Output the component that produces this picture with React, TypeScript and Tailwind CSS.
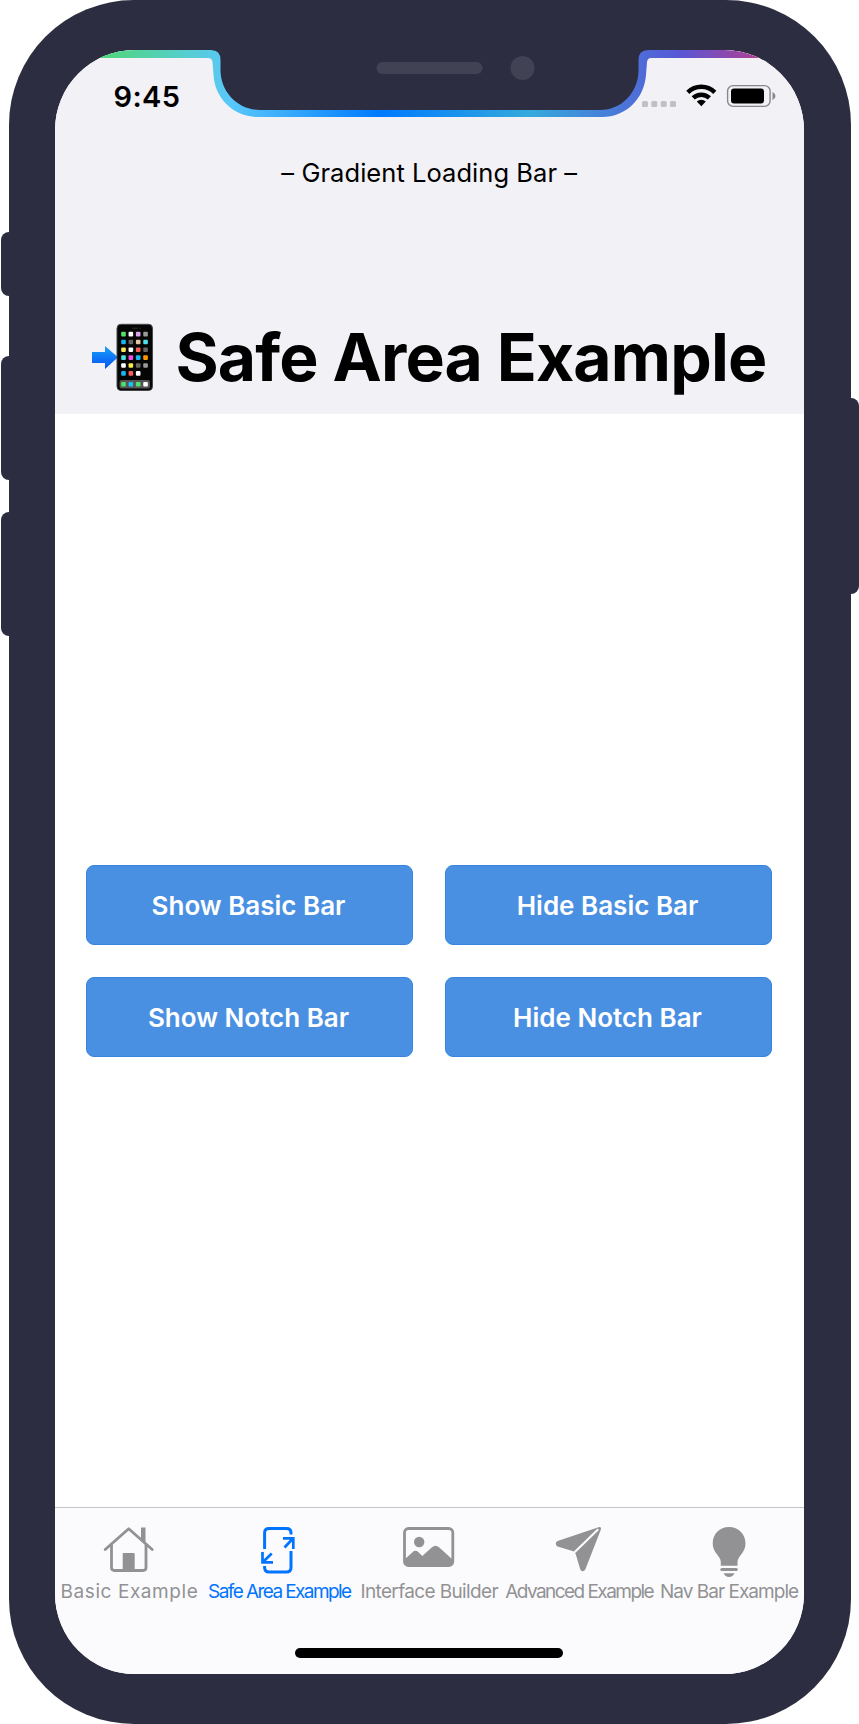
import type { ReactNode } from "react";

const NOTCH_INNER =
  "M54 50H211Q220.5 50 220.5 60V70C220.5 92 238 110 260 110H600C622 110 638.500 92 638.500 70V60Q638.500 50 648 50H804";

function Notch() {
  return (
    <svg className="pointer-events-none absolute top-0 left-0" width="859" height="140" viewBox="0 0 859 140" fill="none">
      <defs>
        <linearGradient id="bar" gradientUnits="userSpaceOnUse" x1="80" y1="0" x2="830" y2="0">
          <stop offset="0" stopColor="#4cd964" />
          <stop offset="0.2" stopColor="#5ac8fa" />
          <stop offset="0.4" stopColor="#007aff" />
          <stop offset="0.6" stopColor="#34aadc" />
          <stop offset="0.8" stopColor="#5856d6" />
          <stop offset="1" stopColor="#ff2d55" />
        </linearGradient>
        <clipPath id="screen">
          <path d="M54.500 130A80 80 0 0 1 134.500 50H724A80 80 0 0 1 804 130Z" />
        </clipPath>
      </defs>
      <g clipPath="url(#screen)">
        <path
          d="M54 50V58H208Q212 58 212.500 62L213.500 75C215 99 234 117 258 117H602C626 117 644 99 646 75L647 62Q647.500 58 651 58H804V50Z"
          fill="url(#bar)"
        />
      </g>
      <path d={NOTCH_INNER + "V40H54Z"} fill="#2d2d41" />
      <rect x="376.500" y="62" width="106" height="12" rx="6" fill="#424255" />
      <circle cx="522.500" cy="68" r="12" fill="#424255" />
    </svg>
  );
}

function StatusIcons() {
  return (
    <svg width="136" height="26" viewBox="641 83 136 26" fill="none">
      <g fill="#c1c0c5">
        <rect x="642" y="101" width="6" height="6" rx="1.500" />
        <rect x="651.300" y="101" width="6" height="6" rx="1.500" />
        <rect x="660.700" y="101" width="6" height="6" rx="1.500" />
        <rect x="670" y="101" width="6" height="6" rx="1.500" />
      </g>
      <g stroke="#000" strokeWidth="4.500">
        <path d="M687.800 92.300A19.500 19.500 0 0 1 714.800 92.300" />
        <path d="M693.200 97.900A11.700 11.700 0 0 1 709.400 97.900" />
      </g>
      <path d="M696.800 101.600A6.700 6.700 0 0 1 705.800 101.600L701.300 106.300Z" fill="#000" />
      <rect x="727.600" y="85.600" width="42.500" height="20.800" rx="5.500" stroke="#88878b" strokeWidth="1.400" />
      <rect x="731" y="88.500" width="33" height="15" rx="3" fill="#000" />
      <path d="M772.500 92Q775.500 93.500 775.500 96T772.500 100.200Z" fill="#88878b" />
    </svg>
  );
}

const APP_ROWS = [
  ["#4fe26a", "#fff", "#dba2ee", "#999"],
  ["#16b5f5", "#666", "#e3c4a0", "#4be0f0"],
  ["#fbe94b", "#fff", "#fa5e55", "#666"],
  ["#4be0e6", "#ef4ee4", "#16b5f5", "#ff9800"],
  ["#fff", "#fbe94b", "#666", "#999"],
  ["#16b5f5", "#fa5e55", "#fff"],
];
const DOCK = ["#4fe26a", "#18c1f6", "#4fe26a", "#fff"];

function PhoneWithArrow() {
  return (
    <svg className="shrink-0" width="62" height="68" viewBox="92 323 62 68">
      <defs>
        <linearGradient id="arrow" x1="0" y1="0" x2="0" y2="1">
          <stop offset="0" stopColor="#18a3f8" />
          <stop offset="1" stopColor="#0550f5" />
        </linearGradient>
      </defs>
      <path d="M92 352H105V346L118 357.300L105 369V363H92Z" fill="url(#arrow)" />
      <rect x="117" y="324.300" width="35.500" height="66.200" rx="4" fill="#050505" stroke="#46484a" strokeWidth="1" />
      <rect x="132" y="327.500" width="6" height="1.800" rx="0.900" fill="#222" />
      <circle cx="140" cy="328.400" r="0.900" fill="#222" />
      <rect x="119.500" y="380" width="30.500" height="8.500" rx="2" fill="#555558" />
      {APP_ROWS.map((row, r) =>
        row.map((c, i) => (
          <rect key={`${r}-${i}`} x={121.2 + i * 7.35} y={331.8 + r * 7.85} width="4.600" height="4.600" rx="1" fill={c} />
        )),
      )}
      {DOCK.map((c, i) => (
        <rect key={i} x={121.2 + i * 7.35} y={382} width="4.600" height="4.600" rx="1" fill={c} />
      ))}
    </svg>
  );
}

function HomeIcon() {
  return (
    <svg width="54" height="54" viewBox="102 1525 54 54" fill="none" stroke="#929294" strokeLinecap="round" strokeLinejoin="round">
      <path d="M105.200 1549.500L128.700 1528.700L152.200 1549.500" strokeWidth="2.800" />
      <path d="M111.500 1545V1567.500Q111.500 1570.500 114.500 1570.500H143Q146 1570.500 146 1567.500V1545" strokeWidth="2.800" />
      <path d="M141 1527.500H145.500V1543L141 1539Z" fill="#929294" stroke="none" />
      <path d="M122.700 1571V1554Q122.700 1553 123.700 1553H133.700Q134.700 1553 134.700 1554V1571Z" fill="#929294" stroke="none" />
    </svg>
  );
}

function SafeAreaIcon() {
  return (
    <svg width="54" height="54" viewBox="252 1525 54 54" fill="none" stroke="#0074ff" strokeWidth="3">
      <path d="M264.600 1549V1533Q264.600 1528.600 269 1528.600H286.500Q291 1528.600 291 1533V1534.500" />
      <path d="M291 1551V1567.500Q291 1572 286.500 1572H269Q264.600 1572 264.600 1567.500V1566" />
      <path d="M283 1538.300H293.300V1549M292.500 1539L284.500 1547.500" strokeWidth="2.700" />
      <path d="M262.500 1552V1562.300H273M263.500 1561.500L271.700 1553.500" strokeWidth="2.700" />
    </svg>
  );
}

function ImageIcon() {
  return (
    <svg width="54" height="54" viewBox="402 1525 54 54" fill="none">
      <rect x="404.500" y="1528.500" width="48.300" height="37" rx="4" stroke="#929294" strokeWidth="2.800" />
      <circle cx="419.200" cy="1542" r="5.200" fill="#929294" />
      <path
        d="M404.500 1559.500L412.500 1552.200Q415.500 1549.500 418.500 1552.200L422.300 1556L432 1547.300Q435.500 1544.300 439 1547.300L453 1560V1562Q453 1566 449 1566H408.500Q404.500 1566 404.500 1562Z"
        fill="#929294"
      />
    </svg>
  );
}

function PlaneIcon() {
  return (
    <svg width="54" height="54" viewBox="552 1525 54 54" fill="#929294">
      <path d="M598.500 1527.200Q601.700 1526.400 600.800 1529.800L585.700 1568.500C584.300 1572.200 581 1572 580 1568.500L575.700 1554L573.300 1551.300L558.300 1546.700C555 1545.500 555 1541.800 558.300 1540.700Z" />
      <path d="M572.500 1554.200L598.200 1529.300" stroke="#fbfbfd" strokeWidth="2.200" />
    </svg>
  );
}

function BulbIcon() {
  return (
    <svg width="54" height="54" viewBox="702 1525 54 54" fill="#929294">
      <path d="M729 1527C738.500 1527 745.500 1534 745.500 1543.500C745.500 1553 737.500 1556 737.500 1562V1565.700H720.800V1562C720.800 1556 712.700 1553 712.700 1543.500C712.700 1534 719.500 1527 729 1527Z" />
      <rect x="720.300" y="1568" width="17.500" height="3" rx="1.500" />
      <path d="M723.700 1573.300H734.500Q733 1577 729 1577T723.700 1573.300Z" />
    </svg>
  );
}

function Button({ children }: { children: ReactNode }) {
  return (
    <button className="flex h-20 items-center justify-center rounded-lg border border-[#3785de] bg-[#4a90e2] pt-[2px] pr-[2px] text-[26px] leading-none font-semibold text-white">
      {children}
    </button>
  );
}

const TABS = [
  { label: "Basic Example", icon: <HomeIcon />, style: "text-[#929294] tracking-[0.57px]" },
  { label: "Safe Area Example", icon: <SafeAreaIcon />, style: "text-[#0074ff] tracking-[-1.58px]" },
  { label: "Interface Builder", icon: <ImageIcon />, style: "text-[#929294] tracking-[-0.63px]" },
  { label: "Advanced Example", icon: <PlaneIcon />, style: "text-[#929294] tracking-[-1.55px]" },
  { label: "Nav Bar Example", icon: <BulbIcon />, style: "text-[#929294] tracking-[-0.97px]" },
];

export default function App() {
  return (
    <div className="relative h-[1724px] w-[859px] overflow-hidden bg-white px-[8.5px] font-['Inter','Liberation_Sans',sans-serif]">
      <div className="absolute top-[232px] left-[0.5px] h-16 w-5 rounded-lg bg-[#2d2d41]" />
      <div className="absolute top-[356px] left-[0.5px] h-[124px] w-5 rounded-lg bg-[#2d2d41]" />
      <div className="absolute top-[512px] left-[0.5px] h-[124px] w-5 rounded-lg bg-[#2d2d41]" />
      <div className="absolute top-[398px] right-[0.5px] h-[196px] w-5 rounded-lg bg-[#2d2d41]" />

      <div className="relative h-full rounded-[125px] bg-[#2d2d41] pt-[50px] pr-[46.5px] pb-[50px] pl-[46px]">
        <div className="flex h-full flex-col overflow-hidden rounded-[80px] bg-white">
          <header className="flex h-[364px] flex-col bg-[#f2f1f6]">
            <div className="flex items-start justify-between pt-[33px] pr-[27px] pl-[59px]">
              <span className="pt-px text-[29px] leading-[26px] font-semibold tracking-[0.4px] text-black">9:45</span>
              <StatusIcons />
            </div>
            <p className="mt-[47px] text-center text-[25.5px] leading-[32px] tracking-[0.05px] text-black">– Gradient Loading Bar –</p>
            <div className="mt-[134px] flex items-center pl-[37px]">
              <PhoneWithArrow />
              <h1 className="ml-[22px] text-[66px] leading-[68px] font-bold tracking-[-0.85px] whitespace-nowrap text-black">Safe Area Example</h1>
            </div>
          </header>

          <main className="flex flex-1 flex-col justify-center pr-8 pl-[31.5px]">
            <div className="grid grid-cols-2 gap-8">
              <Button>Show Basic Bar</Button>
              <Button>Hide Basic Bar</Button>
              <Button>Show Notch Bar</Button>
              <Button>Hide Notch Bar</Button>
            </div>
          </main>

          <nav className="flex h-[167px] flex-col items-center border-t border-[#c5c5c7] bg-[#fbfbfd]">
            <div className="grid w-full grid-cols-5 pt-[17px]">
              {TABS.map((tab) => (
                <a key={tab.label} className={`flex flex-col items-center text-[19px] leading-6 whitespace-nowrap ${tab.style}`}>
                  {tab.icon}
                  <span className="pt-px">{tab.label}</span>
                </a>
              ))}
            </div>
            <div className="mt-[44px] h-[10px] w-[268px] rounded-full bg-black" />
          </nav>
        </div>
      </div>
      <Notch />
    </div>
  );
}
